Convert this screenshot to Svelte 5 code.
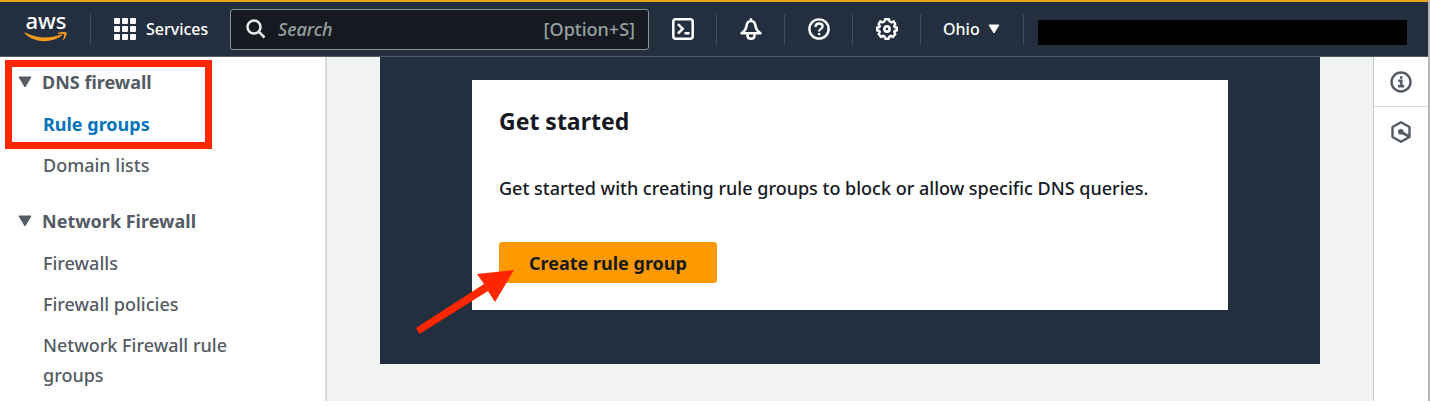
<script lang="ts">
  const sections = [
    {
      title: 'DNS firewall',
      links: [
        { name: 'Rule groups', active: true },
        { name: 'Domain lists', active: false }
      ]
    },
    {
      title: 'Network Firewall',
      links: [
        { name: 'Firewalls', active: false },
        { name: 'Firewall policies', active: false },
        { name: 'Network Firewall rule groups', active: false }
      ]
    }
  ];

  let closed = $state([false, false]);
  let query = $state('');
</script>

<div class="page">
  <header>
    <a class="logo" href="#home" aria-label="AWS">
      <span>aws</span>
      <svg width="44" height="11" viewBox="0 0 44 11">
        <path d="M.6 1.200C.2.600.7.200 1.300.600 13 6.800 26 6.900 37.200 2.300c1-.4 1.700.5.800 1.200C27.500 11.400 10.500 11.300.6 1.200Z" fill="#f7981f" />
        <path d="M34 1.100C36.700-.4 41.800-.3 42.400.500c.6.900-.4 5.600-2.900 7.500-.5.400-.9.100-.6-.4.800-1.800 1.700-4.500 1.200-5.200-.5-.7-3.400-.7-5.500-.5-.7.100-1-.4-.6-.8Z" fill="#f7981f" />
      </svg>
    </a>

    <button class="services">
      <svg width="22" height="22" viewBox="0 0 22 22" fill="#fff">
        {#each [0, 8, 16] as y}
          {#each [0, 8, 16] as x}
            <rect {x} {y} width="6" height="6" rx="1" />
          {/each}
        {/each}
      </svg>
      Services
    </button>

    <label class="search">
      <svg width="20" height="20" viewBox="0 0 20 20" fill="none" stroke="#eaeded" stroke-width="2.5">
        <circle cx="8" cy="8" r="6.500" />
        <path d="M12.700 12.700L18.500 18.500" />
      </svg>
      <input type="text" placeholder="Search" aria-label="Search" bind:value={query} />
      <span>[Option+S]</span>
    </label>

    <div class="tools">
      <button aria-label="CloudShell">
        <svg width="22" height="22" viewBox="0 0 22 22" fill="none" stroke="#fff" stroke-width="2.5">
          <rect x="1.300" y="1.300" width="19.400" height="19.400" rx="2.500" />
          <path d="M6 6.200L10.700 10.800L6 15.500M12.500 15.300H17.500" />
        </svg>
      </button>
      <button aria-label="Notifications">
        <svg width="22" height="22" viewBox="0 0 22 22" fill="none" stroke="#fff" stroke-width="2.5" stroke-linejoin="round">
          <path d="M11 .2V3M1.500 15.200H20.500C17.500 13.300 16 11.500 15.500 8 15.100 4.800 13.600 3 11 3S6.900 4.800 6.500 8C6 11.500 4.500 13.300 1.500 15.200Z" />
          <path d="M7.500 15.500V17.500C7.500 19.500 9 20.800 11 20.800S14.500 19.500 14.500 17.500V15.500" />
        </svg>
      </button>
      <button aria-label="Help">
        <svg width="22" height="22" viewBox="0 0 22 22" fill="none" stroke="#fff" stroke-width="2.4">
          <circle cx="11" cy="11" r="9.600" />
          <path d="M7.500 8.900C7.500 6.700 9 5.500 11.100 5.500S14.600 6.700 14.600 8.500C14.600 10.900 11.100 10.900 11.100 13.500M11.100 15V17.300" />
        </svg>
      </button>
      <button aria-label="Settings">
        <svg width="22" height="22" viewBox="0 0 22 22" fill="none" stroke="#fff" stroke-width="2.4" stroke-linejoin="round">
          <path d="M9 1.300H13L13.600 3.500 15.800 4.400 17.700 3.200 19.300 6.200 18.200 8.300 18.700 9.200 20.800 9.500V12.500L18.700 12.900 18.200 14 19.300 16 17 19 15 17.700 13.400 18.500 12.700 20.700H9.300L8.600 18.500 7 17.700 5 19 2.700 16 3.800 14 3.300 12.900 1.200 12.500V9.500L3.300 9.200 3.800 8.300 2.700 6.200 4.300 3.200 6.200 4.400 8.400 3.500Z" />
          <circle cx="11" cy="11" r="2.600" stroke-width="2.600" />
        </svg>
      </button>
    </div>

    <button class="region">
      Ohio
      <svg width="12" height="10" viewBox="0 0 12 10"><path d="M1 1H11L6 9Z" fill="#fff" stroke="#fff" stroke-linejoin="round" /></svg>
    </button>
    <div class="account"></div>
  </header>

  <div class="body">
    <nav>
      {#each sections as section, i}
        <section>
          <button class="title" onclick={() => (closed[i] = !closed[i])}>
            <svg class:closed={closed[i]} width="14" height="12" viewBox="0 0 14 12"><path d="M1 1H13L7 11Z" fill="#545b64" stroke="#545b64" stroke-linejoin="round" /></svg>
            {section.title}
          </button>
          {#if !closed[i]}
            <ul>
              {#each section.links as link}
                <li><a href="#top" class:active={link.active}>{link.name}</a></li>
              {/each}
            </ul>
          {/if}
        </section>
      {/each}
      <div class="highlight"></div>
    </nav>

    <main>
      <div class="banner">
        <div class="card">
          <h2>Get started</h2>
          <p>Get started with creating rule groups to block or allow specific DNS queries.</p>
          <div class="action">
            <button class="primary">Create rule group</button>
            <svg class="arrow" width="100" height="68" viewBox="0 0 100 68" fill="#ff2600">
              <path d="M99 2L62 6L69 16L1 60L4.500 66L73 23L80 34Z" />
            </svg>
          </div>
        </div>
      </div>
    </main>

    <aside>
      <button aria-label="Info">
        <svg width="22" height="22" viewBox="0 0 22 22" fill="none" stroke="#545b64" stroke-width="2.4">
          <circle cx="11" cy="11" r="9.500" />
          <path d="M8.200 9.800H11.300V15M8 15.200H14.200M10 6.500H12.500" />
        </svg>
      </button>
      <button aria-label="Diagnostics">
        <svg width="22" height="22" viewBox="0 0 22 22" fill="none" stroke="#545b64" stroke-width="2.4" stroke-linejoin="round">
          <path d="M11 1.300L19.500 6V16L11 20.700L2.500 16V6Z" />
          <path d="M11 11L19 15.500" stroke-width="2.600" />
          <circle cx="10.800" cy="10.800" r="2.800" fill="#545b64" stroke="none" />
        </svg>
      </button>
    </aside>
  </div>
</div>

<style>
  :global(body) {
    background: #fff;
  }
  * {
    box-sizing: border-box;
  }
  .page {
    display: flex;
    flex-direction: column;
    min-height: calc(100vh - 5px);
    margin-bottom: 5px;
    border-right: 2px solid #b4b4b6;
    font-family: "Noto Sans", "Open Sans", sans-serif;
    font-size: 18px;
    font-weight: 500;
    line-height: 30px;
    color: #16191f;
  }
  button {
    padding: 0;
    border: 0;
    background: none;
    font: inherit;
    color: inherit;
    cursor: pointer;
  }
  svg {
    display: block;
    flex: none;
  }
  a {
    color: inherit;
    text-decoration: none;
  }

  header {
    display: flex;
    align-items: center;
    height: 57px;
    border-top: 2px solid #eba21c;
    border-bottom: 1px solid #545b64;
    background: #232f3e;
    color: #fff;
    font-size: 16px;
  }
  .logo {
    display: flex;
    flex-direction: column;
    align-items: center;
    gap: 8px;
    width: 66px;
    margin-left: 24px;
    padding-right: 22px;
    font-size: 22px;
    line-height: 8px;
  }
  .services {
    display: flex;
    align-items: center;
    gap: 10px;
    height: 30px;
    width: 140px;
    padding-left: 23px;
    border-left: 1px solid #414d5c;
  }
  .search {
    display: flex;
    align-items: center;
    flex: 0 1 419px;
    min-width: 0;
    height: 41px;
    padding: 0 13px 0 15px;
    border: 1px solid #879596;
    border-radius: 3px;
    background: #16191f;
    font-size: 18px;
    color: #95a0a1;
  }
  .search input {
    flex: 1;
    min-width: 0;
    padding: 0 12px;
    border: 0;
    outline: 0;
    background: none;
    font: inherit;
    color: #fff;
  }
  .search input::placeholder {
    color: #95a0a1;
    font-style: italic;
    opacity: 1;
  }
  .tools {
    display: flex;
  }
  .tools button {
    display: flex;
    align-items: center;
    justify-content: center;
    width: 68px;
    height: 30px;
    border-right: 1px solid #414d5c;
  }
  .region {
    display: flex;
    align-items: center;
    gap: 8px;
    height: 30px;
    padding: 0 23px 0 22px;
    border-right: 1px solid #414d5c;
  }
  .account {
    flex: 1;
    height: 25px;
    margin: 6px 21px 0 14px;
    background: #000;
  }

  .body {
    display: flex;
    flex: 1;
  }
  nav {
    position: relative;
    flex: none;
    width: 327px;
    padding: 10px 60px 11px 18px;
    border-right: 2px solid #d5dbdb;
    color: #545b64;
  }
  section + section {
    margin-top: 26px;
  }
  .title {
    display: flex;
    align-items: center;
    gap: 10px;
    font-weight: 700;
  }
  .closed {
    transform: rotate(-90deg);
  }
  ul {
    display: flex;
    flex-direction: column;
    gap: 11px;
    margin: 12px 0 0;
    padding: 0 0 0 25px;
    list-style: none;
  }
  .active {
    color: #0073bb;
    font-weight: 700;
  }
  .highlight {
    position: absolute;
    top: 3px;
    left: 5px;
    width: 207px;
    height: 89px;
    border: 7px solid #ff2600;
    pointer-events: none;
  }

  main {
    flex: 1;
    min-width: 0;
    padding: 0 53px 37px;
    background: #f1f3f3;
  }
  .banner {
    padding: 23px 92px 54px;
    background: #232f3e;
  }
  .card {
    padding: 26px 27px 27px;
    background: #fff;
  }
  h2 {
    margin: 0;
    font-size: 23px;
    line-height: 30px;
  }
  p {
    margin: 37px 0 39px;
  }
  .action {
    position: relative;
    width: fit-content;
  }
  .primary {
    display: block;
    height: 41px;
    padding: 0 30px;
    border-radius: 3px;
    background: #ff9900;
    font-weight: 700;
  }
  .arrow {
    position: absolute;
    top: 26px;
    left: -84px;
    pointer-events: none;
  }

  aside {
    flex: none;
    width: 55px;
    border-left: 1px solid #c3c9c9;
  }
  aside button {
    display: flex;
    align-items: center;
    justify-content: center;
    width: 100%;
    height: 50px;
  }
  aside button:first-child {
    border-bottom: 1px solid #d5dbdb;
  }
</style>
